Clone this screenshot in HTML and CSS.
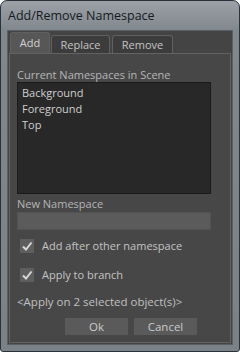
FILE: index.html
```html
<!DOCTYPE html>
<html>
<head>
    <title>Add/Remove Namespace</title>
    <link rel="stylesheet" href="styles.css">
</head>
<body>
    <div class="window">
        <div class="titlebar">Add/Remove Namespace</div>
        <div class="client">
            <!-- tab strip -->
            <div class="tabs">
                <div class="tab active">Add</div>
                <div class="tab">Replace</div>
                <div class="tab">Remove</div>
            </div>
            <div class="pane">
                <div class="label">Current Namespaces in Scene</div>
                <div class="listbox">
                    <div class="item">Background</div>
                    <div class="item">Foreground</div>
                    <div class="item">Top</div>
                </div>

                <div class="label">New Namespace</div>
                <div class="textbox"></div>

                <div class="check-row">
                    <span class="checkbox">
                        <svg width="12" height="12" viewBox="0 0 12 12"><path d="M2 6.5 L5 9.5 L10.5 2.5" fill="none" stroke="#d8d8d8" stroke-width="2"/></svg>
                    </span>
                    Add after other namespace
                </div>
                <div class="check-row">
                    <span class="checkbox">
                        <svg width="12" height="12" viewBox="0 0 12 12"><path d="M2 6.5 L5 9.5 L10.5 2.5" fill="none" stroke="#d8d8d8" stroke-width="2"/></svg>
                    </span>
                    Apply to branch
                </div>

                <div class="info">&lt;Apply on 2 selected object(s)&gt;</div>

                <div class="buttons">
                    <div class="button">Ok</div>
                    <div class="button">Cancel</div>
                </div>
            </div>
        </div>
    </div>
</body>
</html>
```

FILE: styles.css
```css
body {
    margin: 0;
    background-color: #ffffff;
    font-family: "Open Sans", "DejaVu Sans", sans-serif;
}

/* outer window frame */
.window {
    width: 240px;
    height: 352px;
    box-sizing: border-box;
    border: 1px solid #27323b;
    border-radius: 7px 7px 3px 3px;
    background: linear-gradient(to bottom, #9ba1a6, #80878d 30px, #7a8187);
    padding: 0 6px 6px 6px;
    display: flex;
    flex-direction: column;
}

.titlebar {
    height: 29px;
    line-height: 30px;
    padding-left: 1px;
    font-size: 12.5px;
    color: #151a1e;
}

/* dark client area */
.client {
    flex: 1;
    background-color: #444444;
    border: 1px solid #5c6064;
    padding: 1px;
    display: flex;
    flex-direction: column;
}

.tabs {
    display: flex;
    align-items: flex-end;
    height: 21px;
    padding-left: 1px;
}

.tab {
    height: 18px;
    line-height: 17px;
    box-sizing: border-box;
    border: 1px solid #606060;
    border-bottom: none;
    border-radius: 3px 3px 0 0;
    background-color: #3c3c3c;
    color: #c4c4c4;
    font-size: 11px;
    text-align: center;
    margin-right: 1px;
}

.tab:nth-child(2) {
    width: 59px;
}

.tab:nth-child(3) {
    width: 61px;
    margin-left: 1px;
}

.tab.active {
    width: 40px;
    height: 21px;
    line-height: 20px;
    background-color: #575757;
    color: #d0d0d0;
}

/* tab content */
.pane {
    flex: 1;
    border: 1px solid #626262;
    background-color: #474747;
    padding: 13px 19px 0 7px;
    color: #c8c8c8;
    font-size: 11px;
}

.label {
    color: #b6b6b6;
    height: 15px;
    line-height: 15px;
}

.listbox {
    height: 112px;
    margin-bottom: 2px;
    background-color: #282828;
    border: 1px solid #1b1b1b;
    padding: 2px 0 0 4px;
    box-sizing: border-box;
}

.item {
    height: 16px;
    line-height: 16px;
    font-size: 11px;
    color: #cfcfcf;
}

.textbox {
    height: 18px;
    margin-top: 1px;
    background-color: #5b5b5b;
    border: 1px solid #525252;
    box-sizing: border-box;
}

.check-row {
    display: flex;
    align-items: center;
    height: 15px;
    margin-top: 8px;
    margin-left: 3px;
    margin-bottom: 5px;
    font-size: 11px;
    color: #c4c4c4;
}

.check-row + .check-row {
    margin-top: 14px;
}

.checkbox {
    width: 14px;
    height: 14px;
    background-color: #5e5e5e;
    margin-right: 8px;
    display: flex;
    align-items: center;
    justify-content: center;
}

.info {
    margin-top: 12px;
    font-size: 11.5px;
    color: #c0c0c0;
}

.buttons {
    display: flex;
    gap: 6px;
    margin-top: 9px;
    margin-left: 48px;
}

.button {
    width: 63px;
    height: 17px;
    line-height: 17px;
    background-color: #5a5a5a;
    color: #cacaca;
    font-size: 11.5px;
    text-align: center;
}
```
